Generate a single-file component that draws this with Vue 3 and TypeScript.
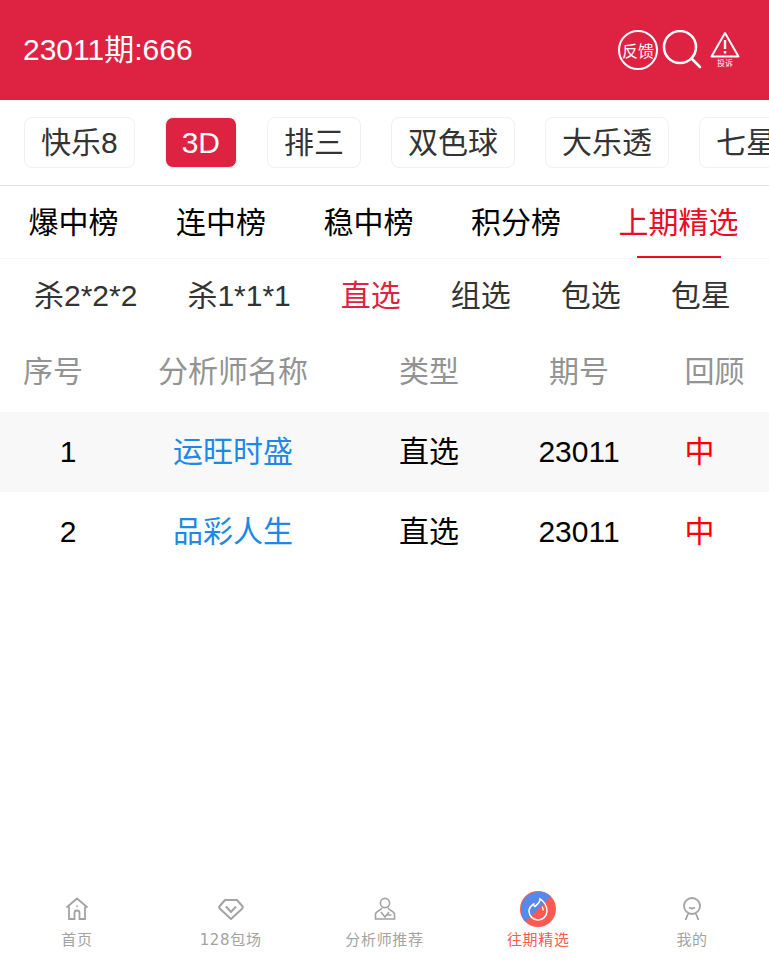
<script setup lang="ts">
const lotteries = ['快乐8', '3D', '排三', '双色球', '大乐透', '七星彩']
const boards = ['爆中榜', '连中榜', '稳中榜', '积分榜', '上期精选']
const kinds = ['杀2*2*2', '杀1*1*1', '直选', '组选', '包选', '包星']
const rows = [
  { no: 1, name: '运旺时盛', type: '直选', issue: '23011', result: '中' },
  { no: 2, name: '品彩人生', type: '直选', issue: '23011', result: '中' }
]
const navs = [
  { key: 'home', label: '首页' },
  { key: 'gem', label: '128包场' },
  { key: 'expert', label: '分析师推荐' },
  { key: 'past', label: '往期精选' },
  { key: 'me', label: '我的' }
]
</script>

<template>
  <div class="page">
    <header class="top">
      <span class="title">23011期:666</span>
      <div class="actions">
        <span class="feedback">反馈</span>
        <svg class="search" width="40" height="40" viewBox="0 0 40 40" fill="none" stroke="#fff" stroke-width="2.6">
          <circle cx="18" cy="17" r="16" />
          <path d="M29.5 28.5 38 37" stroke-linecap="round" />
        </svg>
        <div class="report">
          <svg width="30" height="27" viewBox="0 0 30 27" fill="none" stroke="#fff" stroke-width="2">
            <path d="M15 2 28.5 25.5H1.5Z" stroke-linejoin="round" />
            <path d="M15 9v9M15 20v2.5" stroke-width="2.400" />
          </svg>
          <span>投诉</span>
        </div>
      </div>
    </header>

    <div class="chips">
      <span v-for="(item, i) in lotteries" :key="item" class="chip" :class="{ on: i === 1 }">{{ item }}</span>
    </div>

    <div class="boards">
      <span v-for="(item, i) in boards" :key="item" class="board" :class="{ on: i === 4 }">{{ item }}</span>
    </div>

    <div class="kinds">
      <span v-for="(item, i) in kinds" :key="item" :class="{ on: i === 2 }">{{ item }}</span>
    </div>

    <div class="thead">
      <span>序号</span><span>分析师名称</span><span>类型</span><span>期号</span><span>回顾</span>
    </div>
    <div v-for="row in rows" :key="row.no" class="trow">
      <span>{{ row.no }}</span>
      <span class="name">{{ row.name }}</span>
      <span>{{ row.type }}</span>
      <span>{{ row.issue }}</span>
      <span class="hit">{{ row.result }}</span>
    </div>

    <nav class="tabbar">
      <div v-for="nav in navs" :key="nav.key" class="tab" :class="{ on: nav.key === 'past' }">
        <svg width="36" height="36" viewBox="0 0 36 36" fill="none" stroke="#a3a3a3" stroke-width="1.6">
          <template v-if="nav.key === 'home'">
            <path d="M7.500 16.500 18 7.500l10.500 9" stroke-width="1.800" />
            <path d="M10 15.500V28h5.500v-6a2.500 2.500 0 0 1 5 0v6H26V15.500" stroke-width="1.800" />
            <path d="M18 14.500v1.500" />
          </template>
          <template v-else-if="nav.key === 'gem'">
            <path d="M12 9h12l5.200 6a2 2 0 0 1-.1 2.700L18 28 6.900 17.700a2 2 0 0 1-.1-2.700Z" stroke-width="2" stroke-linejoin="round" />
            <path d="m13 15.500 5 5.500 5-5.500" stroke-width="2" />
          </template>
          <template v-else-if="nav.key === 'expert'">
            <circle cx="19" cy="12" r="4.600" />
            <path d="M16 16.500c0 2.500-6 3.500-6.500 6.500v5h19v-5c-.5-3-6.500-4-6.500-6.500" />
            <path d="m15 21 4 5 4-5M21.500 24h4" />
          </template>
          <template v-else-if="nav.key === 'past'">
            <circle cx="18" cy="18" r="18" fill="#fb5a52" stroke="none" />
            <path d="M30.700 5.300A18 18 0 0 0 5.300 30.700Z" fill="#5589ec" stroke="none" />
            <path d="M20 8c.5 3-2 4.500-5 7.500-1-.5-1.200-1.500-1.200-2.500C11 14.800 9 17 9 20a9 9 0 0 0 18 0c0-5-3-10-7-12Z" stroke="#fff" stroke-width="1.500" />
            <path d="M22 15.500c1 1.500 1.300 2.500 1 4" stroke="#fff" stroke-width="1.300" />
          </template>
          <template v-else>
            <circle cx="18" cy="15" r="8" stroke-width="1.800" />
            <path d="M15 16.500c2 1.300 4 1.300 6 0M14 23 11.500 29M22 23 24.500 29" stroke-width="1.800" />
          </template>
        </svg>
        <span class="label">{{ nav.label }}</span>
      </div>
    </nav>
  </div>
</template>

<style>
html, body { margin: 0; }
</style>

<style scoped>
.page {
  display: flex;
  flex-direction: column;
  height: 100vh;
  overflow: hidden;
  background: #fff;
  font-family: "Liberation Sans", "Noto Sans CJK SC", sans-serif;
  color: #000;
}

.top {
  flex: none;
  height: 100px;
  display: flex;
  align-items: center;
  justify-content: space-between;
  padding: 0 29px 0 23px;
  background: #de2241;
  color: #fff;
}
.title { font-size: 30px; margin-bottom: 6px; }
.actions { display: flex; align-items: center; }
.feedback {
  width: 36px;
  height: 36px;
  border: 2px solid #fff;
  border-radius: 50%;
  display: flex;
  align-items: center;
  justify-content: center;
  font-size: 16px;
  white-space: nowrap;
}
.search { margin-left: 4px; }
.report {
  margin-left: 8px;
  width: 30px;
  display: flex;
  flex-direction: column;
  align-items: center;
  font-size: 8px;
  line-height: 11px;
}
.report svg { display: block; }

.chips {
  flex: none;
  height: 86px;
  box-sizing: border-box;
  display: flex;
  align-items: center;
  gap: 30px;
  padding: 0 24px;
  border-bottom: 1px solid #e3e3e3;
  overflow: hidden;
}
.chip {
  flex: none;
  height: 51px;
  box-sizing: border-box;
  padding: 0 16px;
  line-height: 49px;
  border: 1px solid #f0f0f0;
  border-radius: 8px;
  font-size: 30px;
  color: #333;
}
.chip.on { background: #de2241; color: #fff; }

.boards {
  flex: none;
  height: 73px;
  box-sizing: border-box;
  display: flex;
  gap: 57.5px;
  padding: 1px 0 0 28.5px;
  border-bottom: 1px solid #f7f7f7;
}
.board {
  position: relative;
  font-size: 30px;
  line-height: 72px;
}
.board.on { color: #ee0a24; }
.board.on::after {
  content: "";
  position: absolute;
  left: 18px;
  right: 18px;
  bottom: 0;
  height: 2px;
  background: #ee0a24;
}

.kinds {
  flex: none;
  height: 73px;
  box-sizing: border-box;
  display: flex;
  align-items: center;
  gap: 50px;
  padding: 0 0 6px 34px;
  font-size: 30px;
  color: #333;
}
.kinds .on { color: #de2241; }

.thead, .trow {
  flex: none;
  display: grid;
  text-align: center;
  font-size: 30px;
}
.thead {
  height: 80px;
  line-height: 80px;
  grid-template-columns: 106px 254px 138px 162px 1fr;
  color: #939393;
}
.trow {
  height: 80px;
  line-height: 80px;
  grid-template-columns: 136px 194px 198px 102px 1fr;
}
.thead + .trow { background: #f8f8f8; }
.name { color: #1e88e5; }
.hit { color: #f00; }

.tabbar {
  margin-top: auto;
  flex: none;
  height: 84px;
  display: grid;
  grid-template-columns: repeat(5, 1fr);
}
.tab {
  display: flex;
  flex-direction: column;
  align-items: center;
  padding-top: 6px;
}
.label {
  margin-top: 2px;
  font-family: "DejaVu Sans", "Noto Sans CJK SC", sans-serif;
  font-size: 15px;
  line-height: 22px;
  letter-spacing: 0.7px;
  color: #a3a3a3;
}
.tab.on .label { color: #fb5a52; }
</style>
